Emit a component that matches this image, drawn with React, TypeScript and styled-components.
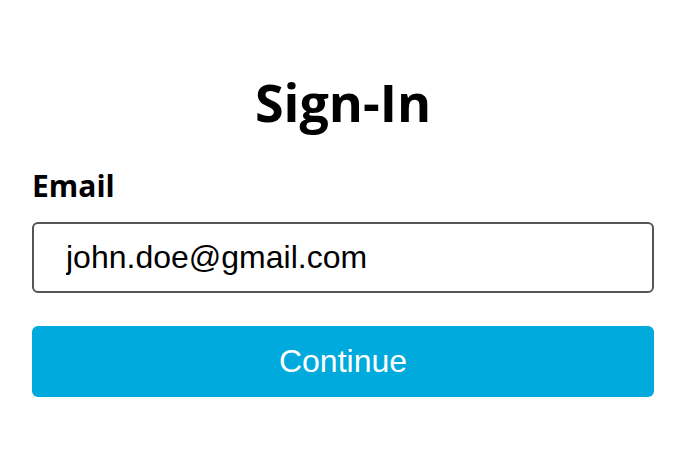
import React from "react";
import styled, { createGlobalStyle } from "styled-components";

const GlobalStyle = createGlobalStyle`
  html, body { margin: 0; padding: 0; background: #ffffff; }
  * { box-sizing: border-box; }
`;

const Page = styled.main`
  display: flex;
  flex-direction: column;
  padding: 0 32px;
`;

const Title = styled.h1`
  margin: 70px 0 0;
  text-align: center;
  font-family: "Open Sans", "Noto Sans", sans-serif;
  font-weight: 700;
  font-size: 52px;
  line-height: 64px;
  color: #000;
`;

const Form = styled.form`
  display: flex;
  flex-direction: column;
  margin-top: 32px;
`;

const Label = styled.label`
  font-family: "Open Sans", "Noto Sans", sans-serif;
  font-weight: 700;
  font-size: 30px;
  line-height: 40px;
  color: #000;
`;

const Input = styled.input`
  margin-top: 16px;
  height: 71px;
  width: 100%;
  border: 2px solid #555555;
  border-radius: 6px;
  padding: 0 32px;
  font-family: "Liberation Sans", Arial, sans-serif;
  font-size: 32px;
  color: #000;
  background: #fff;
  outline: none;
`;

const Button = styled.button`
  margin-top: 33px;
  height: 71px;
  width: 100%;
  border: none;
  border-radius: 6px;
  background: #00aadc;
  color: #ffffff;
  font-family: "Liberation Sans", Arial, sans-serif;
  font-size: 32px;
  cursor: pointer;
`;

export default function App() {
  return (
    <>
      <GlobalStyle />
      <Page>
        <Title>Sign-In</Title>
        <Form onSubmit={(e) => e.preventDefault()}>
          <Label htmlFor="email">Email</Label>
          <Input id="email" type="email" defaultValue="john.doe@gmail.com" />
          <Button type="submit">Continue</Button>
        </Form>
      </Page>
    </>
  );
}
